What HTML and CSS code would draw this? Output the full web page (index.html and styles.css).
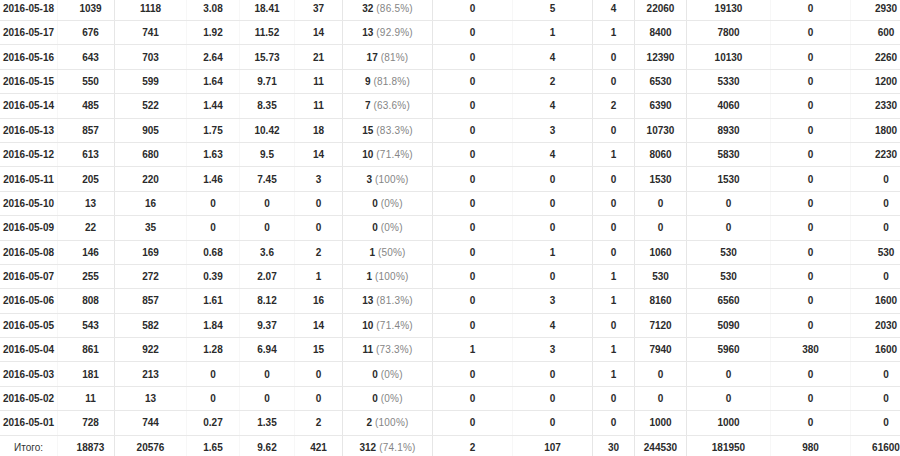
FILE: index.html
```html
<!DOCTYPE html>
<html>
<head>
<meta charset="utf-8">
<link rel="stylesheet" href="styles.css">
</head>
<body>
<div class="stats">
  <div class="row"><div class="c">2016-05-18</div><div class="c">1039</div><div class="c">1118</div><div class="c">3.08</div><div class="c">18.41</div><div class="c">37</div><div class="c">32 <span class="pct">(86.5%)</span></div><div class="c">0</div><div class="c">5</div><div class="c">4</div><div class="c">22060</div><div class="c">19130</div><div class="c">0</div><div class="c">2930</div></div>
  <div class="row"><div class="c">2016-05-17</div><div class="c">676</div><div class="c">741</div><div class="c">1.92</div><div class="c">11.52</div><div class="c">14</div><div class="c">13 <span class="pct">(92.9%)</span></div><div class="c">0</div><div class="c">1</div><div class="c">1</div><div class="c">8400</div><div class="c">7800</div><div class="c">0</div><div class="c">600</div></div>
  <div class="row"><div class="c">2016-05-16</div><div class="c">643</div><div class="c">703</div><div class="c">2.64</div><div class="c">15.73</div><div class="c">21</div><div class="c">17 <span class="pct">(81%)</span></div><div class="c">0</div><div class="c">4</div><div class="c">0</div><div class="c">12390</div><div class="c">10130</div><div class="c">0</div><div class="c">2260</div></div>
  <div class="row"><div class="c">2016-05-15</div><div class="c">550</div><div class="c">599</div><div class="c">1.64</div><div class="c">9.71</div><div class="c">11</div><div class="c">9 <span class="pct">(81.8%)</span></div><div class="c">0</div><div class="c">2</div><div class="c">0</div><div class="c">6530</div><div class="c">5330</div><div class="c">0</div><div class="c">1200</div></div>
  <div class="row"><div class="c">2016-05-14</div><div class="c">485</div><div class="c">522</div><div class="c">1.44</div><div class="c">8.35</div><div class="c">11</div><div class="c">7 <span class="pct">(63.6%)</span></div><div class="c">0</div><div class="c">4</div><div class="c">2</div><div class="c">6390</div><div class="c">4060</div><div class="c">0</div><div class="c">2330</div></div>
  <div class="row"><div class="c">2016-05-13</div><div class="c">857</div><div class="c">905</div><div class="c">1.75</div><div class="c">10.42</div><div class="c">18</div><div class="c">15 <span class="pct">(83.3%)</span></div><div class="c">0</div><div class="c">3</div><div class="c">0</div><div class="c">10730</div><div class="c">8930</div><div class="c">0</div><div class="c">1800</div></div>
  <div class="row"><div class="c">2016-05-12</div><div class="c">613</div><div class="c">680</div><div class="c">1.63</div><div class="c">9.5</div><div class="c">14</div><div class="c">10 <span class="pct">(71.4%)</span></div><div class="c">0</div><div class="c">4</div><div class="c">1</div><div class="c">8060</div><div class="c">5830</div><div class="c">0</div><div class="c">2230</div></div>
  <div class="row"><div class="c">2016-05-11</div><div class="c">205</div><div class="c">220</div><div class="c">1.46</div><div class="c">7.45</div><div class="c">3</div><div class="c">3 <span class="pct">(100%)</span></div><div class="c">0</div><div class="c">0</div><div class="c">0</div><div class="c">1530</div><div class="c">1530</div><div class="c">0</div><div class="c">0</div></div>
  <div class="row"><div class="c">2016-05-10</div><div class="c">13</div><div class="c">16</div><div class="c">0</div><div class="c">0</div><div class="c">0</div><div class="c">0 <span class="pct">(0%)</span></div><div class="c">0</div><div class="c">0</div><div class="c">0</div><div class="c">0</div><div class="c">0</div><div class="c">0</div><div class="c">0</div></div>
  <div class="row"><div class="c">2016-05-09</div><div class="c">22</div><div class="c">35</div><div class="c">0</div><div class="c">0</div><div class="c">0</div><div class="c">0 <span class="pct">(0%)</span></div><div class="c">0</div><div class="c">0</div><div class="c">0</div><div class="c">0</div><div class="c">0</div><div class="c">0</div><div class="c">0</div></div>
  <div class="row"><div class="c">2016-05-08</div><div class="c">146</div><div class="c">169</div><div class="c">0.68</div><div class="c">3.6</div><div class="c">2</div><div class="c">1 <span class="pct">(50%)</span></div><div class="c">0</div><div class="c">1</div><div class="c">0</div><div class="c">1060</div><div class="c">530</div><div class="c">0</div><div class="c">530</div></div>
  <div class="row"><div class="c">2016-05-07</div><div class="c">255</div><div class="c">272</div><div class="c">0.39</div><div class="c">2.07</div><div class="c">1</div><div class="c">1 <span class="pct">(100%)</span></div><div class="c">0</div><div class="c">0</div><div class="c">1</div><div class="c">530</div><div class="c">530</div><div class="c">0</div><div class="c">0</div></div>
  <div class="row"><div class="c">2016-05-06</div><div class="c">808</div><div class="c">857</div><div class="c">1.61</div><div class="c">8.12</div><div class="c">16</div><div class="c">13 <span class="pct">(81.3%)</span></div><div class="c">0</div><div class="c">3</div><div class="c">1</div><div class="c">8160</div><div class="c">6560</div><div class="c">0</div><div class="c">1600</div></div>
  <div class="row"><div class="c">2016-05-05</div><div class="c">543</div><div class="c">582</div><div class="c">1.84</div><div class="c">9.37</div><div class="c">14</div><div class="c">10 <span class="pct">(71.4%)</span></div><div class="c">0</div><div class="c">4</div><div class="c">0</div><div class="c">7120</div><div class="c">5090</div><div class="c">0</div><div class="c">2030</div></div>
  <div class="row"><div class="c">2016-05-04</div><div class="c">861</div><div class="c">922</div><div class="c">1.28</div><div class="c">6.94</div><div class="c">15</div><div class="c">11 <span class="pct">(73.3%)</span></div><div class="c">1</div><div class="c">3</div><div class="c">1</div><div class="c">7940</div><div class="c">5960</div><div class="c">380</div><div class="c">1600</div></div>
  <div class="row"><div class="c">2016-05-03</div><div class="c">181</div><div class="c">213</div><div class="c">0</div><div class="c">0</div><div class="c">0</div><div class="c">0 <span class="pct">(0%)</span></div><div class="c">0</div><div class="c">0</div><div class="c">1</div><div class="c">0</div><div class="c">0</div><div class="c">0</div><div class="c">0</div></div>
  <div class="row"><div class="c">2016-05-02</div><div class="c">11</div><div class="c">13</div><div class="c">0</div><div class="c">0</div><div class="c">0</div><div class="c">0 <span class="pct">(0%)</span></div><div class="c">0</div><div class="c">0</div><div class="c">0</div><div class="c">0</div><div class="c">0</div><div class="c">0</div><div class="c">0</div></div>
  <div class="row"><div class="c">2016-05-01</div><div class="c">728</div><div class="c">744</div><div class="c">0.27</div><div class="c">1.35</div><div class="c">2</div><div class="c">2 <span class="pct">(100%)</span></div><div class="c">0</div><div class="c">0</div><div class="c">0</div><div class="c">1000</div><div class="c">1000</div><div class="c">0</div><div class="c">0</div></div>
  <div class="row total"><div class="c label">Итого:</div><div class="c">18873</div><div class="c">20576</div><div class="c">1.65</div><div class="c">9.62</div><div class="c">421</div><div class="c">312 <span class="pct">(74.1%)</span></div><div class="c">2</div><div class="c">107</div><div class="c">30</div><div class="c">244530</div><div class="c">181950</div><div class="c">980</div><div class="c">61600</div></div>
</div>
</body>
</html>
```
FILE: styles.css
```css
html, body {
  margin: 0;
  padding: 0;
  background: #ffffff;
  overflow: hidden;
}
body {
  width: 900px;
  height: 456px;
  font-family: "Liberation Sans", Arial, sans-serif;
}
.stats {
  width: 921px;
  margin-top: -3.4px;
}
.row {
  display: grid;
  grid-template-columns: 58px 57px 72px 53px 55px 48px 90px 80px 80px 42px 52px 84px 80px 70px;
  height: 24.4px;
  box-sizing: border-box;
  border-bottom: 1px solid #e8e8e8;
}
.c {
  display: flex;
  align-items: center;
  justify-content: center;
  font-size: 10px;
  font-weight: bold;
  color: #2b2b2b;
  white-space: nowrap;
  box-sizing: border-box;
  border-right: 1px solid #f7f7f7;
}
.c:nth-child(2) { padding-left: 9px; }
.c:nth-child(2),
.c:nth-child(6),
.c:nth-child(7),
.c:nth-child(9),
.c:nth-child(10),
.c:nth-child(11) {
  border-right-color: #e6e6e6;
}
.c:last-child { border-right: none; }
.pct {
  font-weight: normal;
  color: #858585;
  margin-left: 3px;
  letter-spacing: 0.2px;
}
.label {
  font-weight: normal;
  color: #333333;
}
```
